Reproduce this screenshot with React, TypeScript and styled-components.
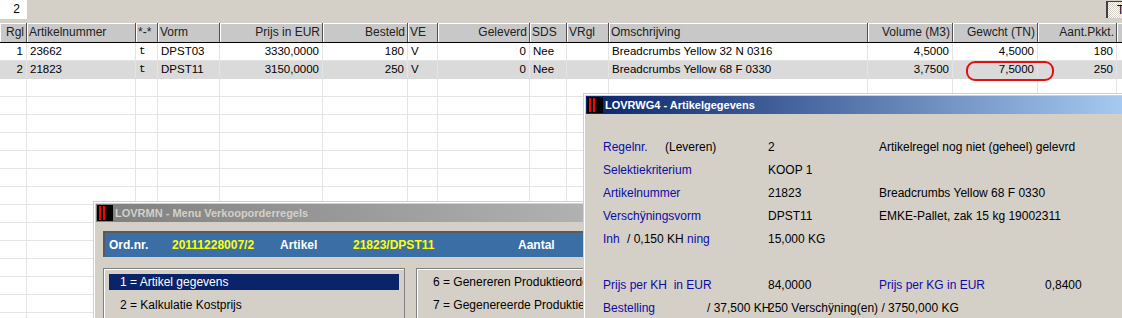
import React from "react"
import styled, { createGlobalStyle } from "styled-components"

const GlobalStyle = createGlobalStyle`
    html, body { margin: 0; padding: 0; background: #fff; }
    body { font-family: "Liberation Sans", Arial, sans-serif; color: #000; }
`

type Align = "left" | "right"

const columns: { label: string; w: number; align: Align }[] = [
    { label: "Rgl", w: 27, align: "right" },
    { label: "Artikelnummer", w: 109, align: "left" },
    { label: "*-*", w: 22, align: "left" },
    { label: "Vorm", w: 62, align: "left" },
    { label: "Prijs in EUR", w: 103, align: "right" },
    { label: "Besteld", w: 85, align: "right" },
    { label: "VE", w: 30, align: "left" },
    { label: "Geleverd", w: 92, align: "right" },
    { label: "SDS", w: 37, align: "left" },
    { label: "VRgl", w: 42, align: "left" },
    { label: "Omschrijving", w: 259, align: "left" },
    { label: "Volume (M3)", w: 85, align: "right" },
    { label: "Gewcht (TN)", w: 85, align: "right" },
    { label: "Aant.Pkkt.", w: 79, align: "right" },
    { label: "", w: 40, align: "left" },
]

const rows = [
    ["1", "23662", "t", "DPST03", "3330,0000", "180", "V", "0", "Nee", "", "Breadcrumbs Yellow 32 N 0316", "4,5000", "4,5000", "180", ""],
    ["2", "21823", "t", "DPST11", "3150,0000", "250", "V", "0", "Nee", "", "Breadcrumbs Yellow 68 F 0330", "3,7500", "7,5000", "250", ""],
]

const template = columns.map((c) => `${c.w}px`).join(" ")

const Screen = styled.div`
    position: relative;
    width: 1122px;
    height: 318px;
    overflow: hidden;
    background: #fff;
`

const TopStrip = styled.div`
    height: 23px;
    background: #d4d0c8;
    display: flex;
    justify-content: space-between;
    align-items: flex-start;
`

const RowInput = styled.div`
    width: 27px;
    height: 19px;
    box-sizing: border-box;
    background: #fff;
    padding-right: 7px;
    text-align: right;
    font-size: 12px;
    line-height: 19px;
`

const ToolButton = styled.div`
    width: 16px;
    height: 17px;
    margin-top: 1px;
    box-sizing: border-box;
    border-left: 2px solid #404040;
    border-top: 1px solid #404040;
    background: repeating-conic-gradient(#ffffff 0 25%, #d4d0c8 0 50%) 0 0 / 2px 2px;
    font-size: 12px;
    line-height: 16px;
    padding-left: 9px;
    overflow: hidden;
`

const HeaderRow = styled.div`
    display: grid;
    grid-template-columns: ${template};
    height: 20px;
    box-sizing: border-box;
    border-bottom: 1px solid #000;
    background: #c8c8c8;
`

const HeaderCell = styled.div<{ $align: Align }>`
    box-sizing: border-box;
    border-right: 1px solid #505050;
    box-shadow: inset 1px 1px 0 #ffffff;
    padding: 0 2px;
    text-align: ${(p) => p.$align};
    font-size: 12px;
    line-height: 19px;
    white-space: nowrap;
    overflow: hidden;
    color: #202020;
`

const GridRow = styled.div<{ $shade?: boolean }>`
    display: grid;
    grid-template-columns: ${template};
    height: 18px;
    box-sizing: border-box;
    border-bottom: 1px solid ${(p) => (p.$shade ? "#dadada" : "#e4e4e4")};
    background: ${(p) => (p.$shade ? "#dadada" : "#ffffff")};
`

const Cell = styled.div<{ $align: Align; $mono?: boolean }>`
    box-sizing: border-box;
    border-right: 1px solid #e4e4e4;
    padding: 0 3px;
    text-align: ${(p) => p.$align};
    font-family: ${(p) => (p.$mono ? `"Liberation Mono", monospace` : `"Liberation Sans", Arial, sans-serif`)};
    font-size: ${(p) => (p.$mono ? "11px" : "11.5px")};
    line-height: 17px;
    white-space: nowrap;
    overflow: hidden;
`

const Marker = styled.div`
    position: absolute;
    left: 966px;
    top: 61px;
    width: 88px;
    height: 20px;
    box-sizing: border-box;
    border: 2px solid #e41010;
    border-radius: 9px;
`

const Window = styled.div<{ $x: number; $y: number; $w: number; $h: number }>`
    position: absolute;
    left: ${(p) => p.$x}px;
    top: ${(p) => p.$y}px;
    width: ${(p) => p.$w}px;
    height: ${(p) => p.$h}px;
    box-sizing: border-box;
    border: 1px solid #d4d0c8;
    box-shadow: inset 1px 1px 0 #ffffff;
    padding: 2px;
    background: #d4d0c8;
    display: flex;
    flex-direction: column;
`

const TitleBar = styled.div<{ $active?: boolean }>`
    height: 18px;
    flex: none;
    display: flex;
    align-items: center;
    gap: 2px;
    padding-left: 1px;
    background: ${(p) =>
        p.$active ? "linear-gradient(90deg, #0a246a, #a6caf0)" : "linear-gradient(90deg, #808080, #c0c0c0)"};
    color: ${(p) => (p.$active ? "#ffffff" : "#d4d0c8")};
    font-size: 11px;
    font-weight: bold;
    white-space: nowrap;
`

const AppIcon = () => (
    <svg width="16" height="16" viewBox="0 0 16 16">
        <rect width="16" height="16" fill="#000" />
        <rect x="2" y="1" width="2" height="14" fill="#ff0000" />
        <rect x="6" y="1" width="2" height="14" fill="#ff0000" />
    </svg>
)

const DetailBody = styled.div`
    padding: 21px 0 0 17px;
    display: grid;
    grid-template-columns: 165px 111px 166px auto;
    grid-auto-rows: 23px;
    align-items: center;
    font-size: 12px;
    white-space: nowrap;
`

const Label = styled.span`
    color: #0c0ca4;
`

const LabelPair = styled.div<{ $gap: number }>`
    display: flex;
    & > :first-child {
        width: ${(p) => p.$gap}px;
        flex: none;
    }
`

const Value = styled.div<{ $span?: number }>`
    grid-column: span ${(p) => p.$span ?? 1};
`

const Spacer = styled.div`
    grid-column: 1 / -1;
`

const MenuBody = styled.div`
    padding: 9px 0 0 7px;
    display: flex;
    flex-direction: column;
    gap: 11px;
`

const InfoBar = styled.div`
    height: 26px;
    box-sizing: border-box;
    background: #3a6ea5;
    border-top: 2px solid #5a5a5a;
    border-left: 2px solid #5a5a5a;
    padding-left: 4px;
    display: grid;
    grid-template-columns: 63px 108px 73px 165px auto;
    align-items: center;
    font-size: 12px;
    font-weight: bold;
    color: #ffffff;
    white-space: nowrap;
`

const Yellow = styled.span`
    color: #ffff00;
`

const MenuColumns = styled.div`
    display: flex;
    gap: 11px;
`

const MenuBox = styled.div<{ $w?: number }>`
    ${(p) => (p.$w ? `width: ${p.$w}px; flex: none;` : "flex: 1;")}
    height: 80px;
    box-sizing: border-box;
    border: 1px solid #808080;
    box-shadow: inset 1px 1px 0 #ffffff;
    padding: 5px;
    display: flex;
    flex-direction: column;
    gap: 7px;
`

const MenuItem = styled.div<{ $selected?: boolean }>`
    height: 16px;
    padding-left: 11px;
    font-size: 12px;
    line-height: 16px;
    white-space: nowrap;
    overflow: hidden;
    background: ${(p) => (p.$selected ? "#0a246a" : "transparent")};
    color: ${(p) => (p.$selected ? "#ffffff" : "#000000")};
`

const App: React.FC = () => {
    return (
        <Screen>
            <GlobalStyle />
            <TopStrip>
                <RowInput>2</RowInput>
                <ToolButton>T</ToolButton>
            </TopStrip>
            <HeaderRow>
                {columns.map((c, i) => (
                    <HeaderCell key={i} $align={c.align}>
                        {c.label}
                    </HeaderCell>
                ))}
            </HeaderRow>
            {rows.map((r, ri) => (
                <GridRow key={ri} $shade={ri === 1}>
                    {r.map((v, ci) => (
                        <Cell key={ci} $align={columns[ci].align} $mono={ci === 2}>
                            {v}
                        </Cell>
                    ))}
                </GridRow>
            ))}
            {Array.from({ length: 14 }).map((_, ri) => (
                <GridRow key={`e${ri}`}>
                    {columns.map((c, ci) => (
                        <Cell key={ci} $align={c.align} />
                    ))}
                </GridRow>
            ))}
            <Marker />

            <Window $x={93} $y={201} $w={640} $h={140}>
                <TitleBar>
                    <AppIcon />
                    LOVRMN - Menu Verkooporderregels
                </TitleBar>
                <MenuBody>
                    <InfoBar>
                        <span>Ord.nr.</span>
                        <Yellow>20111228007/2</Yellow>
                        <span>Artikel</span>
                        <Yellow>21823/DPST11</Yellow>
                        <span>Aantal</span>
                    </InfoBar>
                    <MenuColumns>
                        <MenuBox $w={302}>
                            <MenuItem $selected>1 = Artikel gegevens</MenuItem>
                            <MenuItem>2 = Kalkulatie Kostprijs</MenuItem>
                        </MenuBox>
                        <MenuBox>
                            <MenuItem>6 = Genereren Produktieorders</MenuItem>
                            <MenuItem>7 = Gegenereerde Produktieorders</MenuItem>
                        </MenuBox>
                    </MenuColumns>
                </MenuBody>
            </Window>

            <Window $x={583} $y={93} $w={545} $h={240}>
                <TitleBar $active>
                    <AppIcon />
                    LOVRWG4 - Artikelgegevens
                </TitleBar>
                <DetailBody>
                    <LabelPair $gap={62}>
                        <Label>Regelnr.</Label>
                        <span>(Leveren)</span>
                    </LabelPair>
                    <Value>2</Value>
                    <Value $span={2}>Artikelregel nog niet (geheel) gelevrd</Value>

                    <Label>Selektiekriterium</Label>
                    <Value $span={3}>KOOP 1</Value>

                    <Label>Artikelnummer</Label>
                    <Value>21823</Value>
                    <Value $span={2}>Breadcrumbs Yellow 68 F 0330</Value>

                    <Label>Verschÿningsvorm</Label>
                    <Value>DPST11</Value>
                    <Value $span={2}>EMKE-Pallet, zak 15 kg 19002311</Value>

                    <LabelPair $gap={24}>
                        <Label>Inh</Label>
                        <span>
                            / 0,150 KH <Label>ning</Label>
                        </span>
                    </LabelPair>
                    <Value $span={3}>15,000 KG</Value>

                    <Spacer />

                    <Label>Prijs per KH&nbsp; in EUR</Label>
                    <Value>84,0000</Value>
                    <Label>Prijs per KG in EUR</Label>
                    <Value>0,8400</Value>

                    <LabelPair $gap={104}>
                        <Label>Bestelling</Label>
                        <span>/ 37,500 KH</span>
                    </LabelPair>
                    <Value $span={3}>250 Verschÿning(en) / 3750,000 KG</Value>
                </DetailBody>
            </Window>
        </Screen>
    )
}

export default App
